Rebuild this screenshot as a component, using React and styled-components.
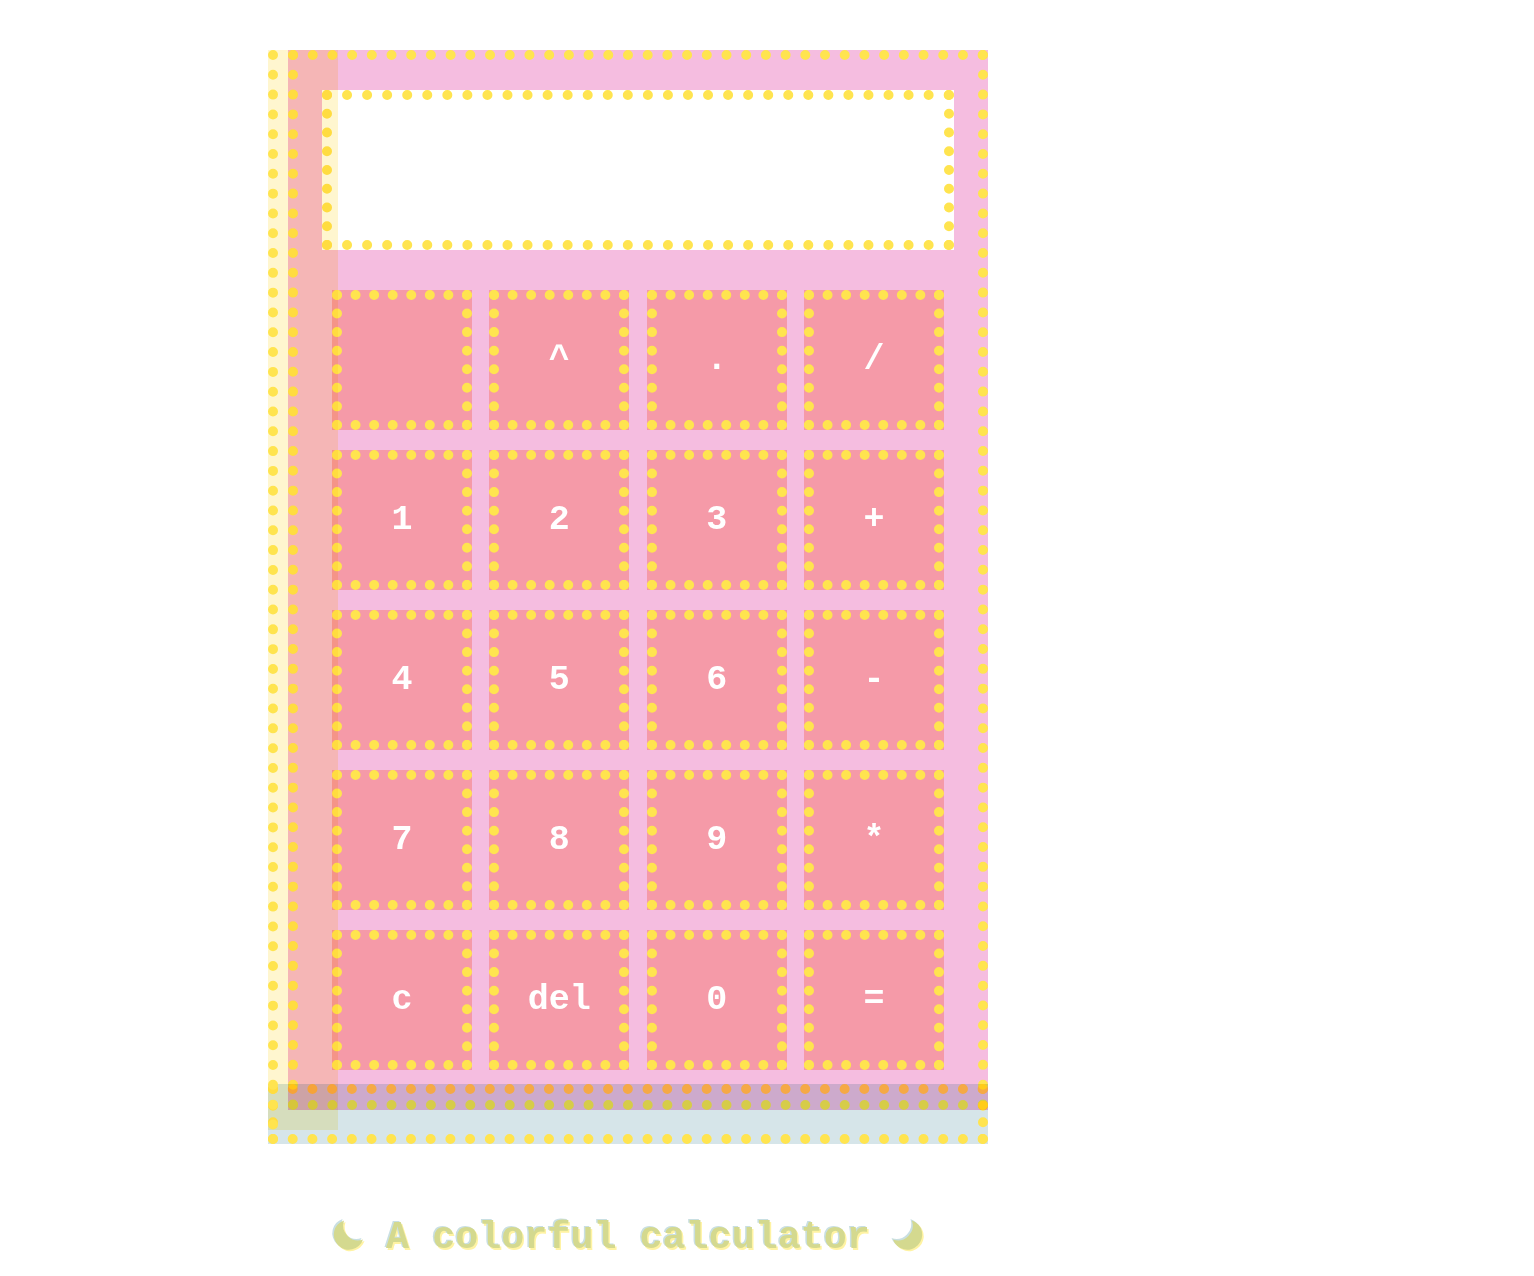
import styled, { createGlobalStyle } from "styled-components";

const Global = createGlobalStyle`
  * { box-sizing: border-box; }
  html, body { margin: 0; background: #fff; }
  body { font-family: "Liberation Mono", "Courier New", monospace; }
`;

const KEYS = ["", "^", ".", "/", "1", "2", "3", "+", "4", "5", "6", "-", "7", "8", "9", "*", "c", "del", "0", "="];

function Crescent({ flip }) {
  const d = "M11 0.5 A15 15 0 1 0 30 19.5 A15 15 0 0 1 11 0.5 Z";
  const mirror = flip ? "translate(30 0) scale(-1 1)" : "";
  return (
    <MoonIcon viewBox="0 0 30 30">
      <path d={d} fill="#c9dfe2" transform={`translate(-1.5 -1.5) ${mirror}`} />
      <path d={d} fill="#fff3a3" transform={`translate(1.5 1.5) ${mirror}`} />
      <path d={d} fill="#d4d98f" transform={mirror} />
    </MoonIcon>
  );
}

export default function App() {
  return (
    <Page>
      <Global />
      <Stack>
        <Calculator>
          <Display />
          <Keys>
            {KEYS.map((key, i) => (
              <Key key={i}>{key}</Key>
            ))}
          </Keys>
        </Calculator>
        <YellowLayer />
        <BlueLayer />
        <YellowDots />
      </Stack>
      <Caption>
        <Crescent /> A colorful calculator <Crescent flip />
      </Caption>
    </Page>
  );
}

const Page = styled.div`
  width: 720px;
  margin-left: 268px;
  padding-top: 50px;
  height: 1276px;
`;

const Stack = styled.div`
  position: relative;
  height: 1094px;
  padding-left: 20px;
`;

const Calculator = styled.div`
  width: 700px;
  height: 1060px;
  padding: 30px 24px;
  border: 10px dotted #ffe44f;
  background: #f5bde0;
  display: flex;
  flex-direction: column;
  align-items: center;
  gap: 40px;
`;

const Display = styled.div`
  width: 632px;
  height: 160px;
  flex: none;
  border: 10px dotted #ffe44f;
  background: #fff;
`;

const Keys = styled.div`
  width: 612px;
  display: grid;
  grid-template-columns: repeat(4, 140px);
  justify-content: space-between;
  row-gap: 20px;
`;

const Key = styled.button`
  width: 140px;
  height: 140px;
  padding: 0;
  border: 10px dotted #ffe44f;
  background: #f59aa8;
  color: #fff;
  font-family: "Liberation Mono", "Courier New", monospace;
  font-size: 35px;
  font-weight: 700;
`;

const YellowLayer = styled.div`
  position: absolute;
  top: 0;
  left: 0;
  width: 70px;
  height: 1080px;
  background: #fff6cf;
  mix-blend-mode: multiply;
`;

const BlueLayer = styled.div`
  position: absolute;
  top: 1034px;
  left: 0;
  width: 720px;
  height: 60px;
  border: 10px dotted #ffe44f;
  background: #d6e5e9;
  mix-blend-mode: multiply;
`;

const YellowDots = styled.div`
  position: absolute;
  top: 0;
  left: 0;
  width: 10px;
  height: 1080px;
  border-left: 10px dotted #ffe44f;
`;

const Caption = styled.h1`
  margin: 72px 0 0;
  font-size: 38.4px;
  line-height: 44px;
  font-weight: 700;
  text-align: center;
  white-space: nowrap;
  color: #d4d98f;
  text-shadow: -1.5px -1.5px 0 #c9dfe2, 1.5px 1.5px 0 #fff3a3;
`;

const MoonIcon = styled.svg`
  width: 30px;
  height: 30px;
  overflow: visible;
  vertical-align: -2px;
`;
